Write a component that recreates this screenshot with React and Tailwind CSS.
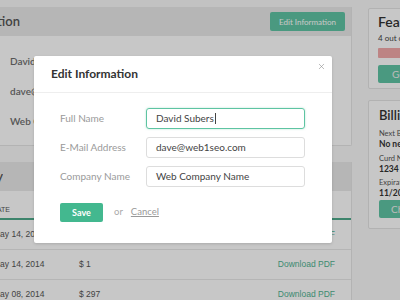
import { X } from "lucide-react";

const infoRows = ["David Subers", "dave@web1seo.com", "Web Company Name"];

const invoices = [
  { date: "May 14, 2014", amount: "$ 1" },
  { date: "May 14, 2014", amount: "$ 1" },
  { date: "May 08, 2014", amount: "$ 297" },
];

const fields = [
  { label: "Full Name", value: "David Subers", focused: true },
  { label: "E-Mail Address", value: "dave@web1seo.com" },
  { label: "Company Name", value: "Web Company Name" },
];

const Clipped = ({ width, className, children }) => (
  <div className={`overflow-hidden flex justify-end shrink-0 ${width}`}>
    <span className={`whitespace-nowrap ${className}`}>{children}</span>
  </div>
);

const App = () => {
  return (
    <div className="relative w-[400px] h-[300px] overflow-hidden bg-[#f9f9f9] font-['Lato',sans-serif]">
      <div className="flex pt-[7px]">
        {/* main column */}
        <div className="w-[352px] shrink-0 flex flex-col gap-[16px]">
          <div className="bg-white border-r border-b border-[#e6e6e6] rounded-br-[2px]">
            <div className="h-[29px] bg-[#e9e9e9] flex items-center justify-between pr-[6px]">
              <Clipped width="w-[20px]" className="text-[13px] font-semibold text-[#555]">
                Account Information
              </Clipped>
              <button className="h-[19px] w-[75px] rounded-[2px] bg-[#5fc5a4] text-white text-[8px]">
                Edit Information
              </button>
            </div>
            <div className="flex flex-col pl-[10px] pt-[10px] pb-[9px]">
              {infoRows.map((r) => (
                <div key={r} className="h-[30px] flex items-center text-[10px] font-semibold text-[#6e6e6e]">
                  {r}
                </div>
              ))}
            </div>
          </div>

          <div className="bg-white border-r border-[#e6e6e6]">
            <div className="h-[29px] bg-[#e9e9e9] flex items-center">
              <Clipped width="w-[3px]" className="text-[13px] font-semibold text-[#555]">
                Billing History
              </Clipped>
            </div>
            <div className="h-[29px] flex items-end pb-[3px] border-b-2 border-[#4fa98b] font-['Liberation_Sans',sans-serif]">
              <Clipped width="w-[10px]" className="text-[7px] text-[#555]">
                DATE
              </Clipped>
              <span className="ml-[70px] text-[7px] text-[#555]">AMOUNT</span>
            </div>
            {invoices.map((inv, i) => (
              <div
                key={i}
                className="h-[30px] flex items-center border-b border-[#e8e8e8] text-[8.5px] text-[#555] font-['Liberation_Sans',sans-serif]"
              >
                <span className="ml-[-7px] w-[86px] whitespace-nowrap">{inv.date}</span>
                <span className="flex-1">{inv.amount}</span>
                <span className="pr-[16px] text-[#4eb290]">Download PDF</span>
              </div>
            ))}
          </div>
        </div>

        {/* side column */}
        <div className="ml-[16px] w-[200px] shrink-0 flex flex-col gap-[11px] pt-[1px]">
          <div className="h-[81px] bg-white border border-[#e4e4e4] rounded-[2px] px-[9px] pt-[4px]">
            <div className="text-[14px] font-semibold text-[#333] leading-[18px]">Features</div>
            <div className="text-[8px] text-[#444] mt-[2px] leading-[10px]">4 out of 5 features used</div>
            <div className="h-[10px] bg-[#f3a9a9] rounded-[1px] mt-[5px]" />
            <div className="h-[18px] bg-[#5fc5a4] rounded-[2px] mt-[7px] text-[#f0f0f0] text-[10px] flex items-center pl-[14px]">
              Get More Features
            </div>
          </div>
          <div className="h-[129px] bg-white border border-[#e4e4e4] rounded-[2px] px-[10px] pt-[5px]">
            <div className="text-[13px] font-semibold text-[#333] leading-[18px]">Billing Info</div>
            <div className="text-[7.5px] text-[#555] mt-[5px] leading-[9px]">Next Billing Date</div>
            <div className="text-[8.5px] font-bold text-[#333] mt-[1px] leading-[10px]">No next billing</div>
            <div className="text-[7.5px] text-[#555] mt-[5px] leading-[9px]">Curd Number</div>
            <div className="text-[8.5px] font-bold text-[#333] mt-[1px] leading-[10px]">1234 5678 9012</div>
            <div className="text-[7.5px] text-[#555] mt-[4px] leading-[9px]">Expiration</div>
            <div className="text-[8.5px] font-bold text-[#333] mt-[1px] leading-[10px]">11/2018</div>
            <div className="h-[18px] bg-[#5fc5a4] rounded-[2px] mt-[2px] text-[#f0f0f0] text-[10px] flex items-center pl-[12px]">
              Change Card
            </div>
          </div>
        </div>
      </div>

      {/* overlay */}
      <div className="absolute inset-0 bg-[rgba(0,0,0,0.22)]" />

      {/* modal */}
      <div className="absolute left-[34px] top-[56px] w-[298px] h-[187px] bg-white rounded-[2px] shadow-[0_1px_3px_rgba(0,0,0,0.15)]">
        <div className="h-[37px] border-b border-[#eeeeee] flex items-center justify-between pl-[17px] pr-[6px]">
          <span className="text-[12px] font-bold text-[#333]">Edit Information</span>
          <X className="w-[9px] h-[9px] text-[#888] -mt-[16px]" strokeWidth={1.5} />
        </div>
        <div className="flex flex-col gap-[8px] pt-[15px] pl-[26px] pr-[27px]">
          {fields.map((f) => (
            <div key={f.label} className="flex items-center">
              <span className="w-[86px] text-[10px] text-[#9a9a9a]">{f.label}</span>
              <div
                className={`flex-1 h-[21px] rounded-[3px] flex items-center pl-[9px] text-[10px] text-[#444] ${
                  f.focused ? "border border-[#5ec4a2] shadow-[0_0_2px_rgba(94,196,162,0.5)]" : "border border-[#dddddd]"
                }`}
              >
                {f.value}
                {f.focused && <span className="ml-px w-px h-[11px] bg-[#444]" />}
              </div>
            </div>
          ))}
        </div>
        <div className="flex items-center pl-[26px] mt-[16px]">
          <button className="w-[43px] h-[19px] rounded-[2px] bg-[#43b88f] text-white text-[9px] font-bold">
            Save
          </button>
          <span className="ml-[11px] text-[9.5px] text-[#aaa]">or</span>
          <span className="ml-[8px] text-[9.5px] text-[#999] underline">Cancel</span>
        </div>
      </div>
    </div>
  );
};

export default App;
